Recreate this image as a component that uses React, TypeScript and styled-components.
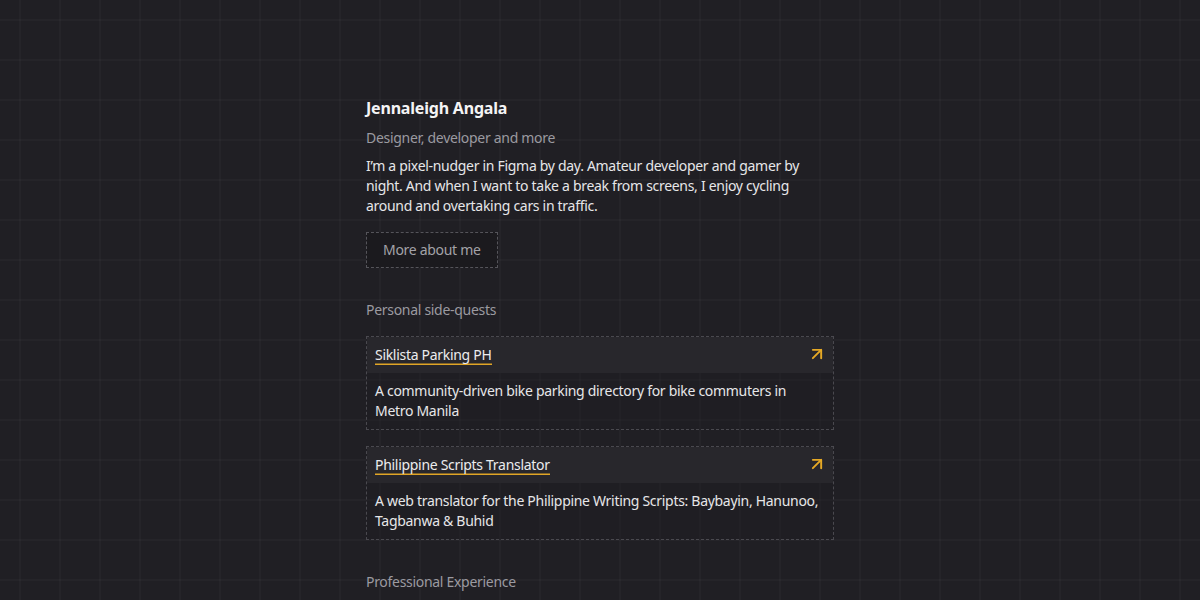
import React from "react";
import styled, { createGlobalStyle } from "styled-components";
import { ArrowUpRight } from "lucide-react";

const GlobalStyle = createGlobalStyle`
  html, body {
    margin: 0;
    padding: 0;
  }
  body {
    background-color: #201f24;
    background-image:
      linear-gradient(to right, rgba(255,255,255,0.022) 0 2px, transparent 2px),
      linear-gradient(to bottom, rgba(255,255,255,0.022) 0 2px, transparent 2px);
    background-size: 40px 40px;
    background-position: 19px 19px;
    font-family: "Noto Sans", "Open Sans", sans-serif;
    letter-spacing: -0.3px;
    color: #e6e6e8;
    min-height: 600px;
  }
`;

const Main = styled.main`
  width: 468px;
  margin: 0 auto;
  padding-top: 96px;
  display: flex;
  flex-direction: column;
`;

const Name = styled.h1`
  margin: 0;
  font-size: 16px;
  line-height: 24px;
  font-weight: 700;
  letter-spacing: -0.2px;
  color: #f4f4f5;
`;

const Subtitle = styled.p`
  margin: 8px 0 0;
  font-size: 14px;
  line-height: 20px;
  color: #9b9aa0;
`;

const Bio = styled.p`
  margin: 8px 0 0;
  font-size: 14px;
  line-height: 20px;
  color: #e6e6e8;
`;

const Button = styled.a`
  align-self: flex-start;
  margin-top: 16px;
  padding: 7px 16px;
  font-size: 14px;
  line-height: 20px;
  color: #a3a2a8;
  background: #1b1a1e;
  border: 1px dashed #55545a;
  text-decoration: none;
`;

const SectionTitle = styled.h2`
  margin: 32px 0 0;
  font-size: 14px;
  line-height: 20px;
  font-weight: 400;
  color: #9b9aa0;
`;

const CardList = styled.div`
  display: flex;
  flex-direction: column;
  gap: 16px;
  margin-top: 16px;
`;

const Card = styled.div`
  border: 1px dashed #4a494f;
  background: rgba(30, 29, 34, 0.4);
`;

const CardHeader = styled.div`
  display: flex;
  align-items: center;
  justify-content: space-between;
  padding: 8px;
  background: #28272c;
`;

const CardTitle = styled.a`
  font-size: 14px;
  line-height: 20px;
  color: #ececee;
  text-decoration: none;
  box-shadow: inset 0 -1.5px 0 #e0a526;
`;

const ArrowIcon = styled(ArrowUpRight)`
  color: #e6a925;
  margin: -3px -2px 0 0;
`;

const CardBody = styled.p`
  margin: 0;
  padding: 8px;
  font-size: 14px;
  line-height: 20px;
  color: #e6e6e8;
`;

const projects = [
  {
    title: "Siklista Parking PH",
    desc: "A community-driven bike parking directory for bike commuters in Metro Manila",
  },
  {
    title: "Philippine Scripts Translator",
    desc: "A web translator for the Philippine Writing Scripts: Baybayin, Hanunoo, Tagbanwa & Buhid",
  },
];

export default function App() {
  return (
    <>
      <GlobalStyle />
      <Main>
        <Name>Jennaleigh Angala</Name>
        <Subtitle>Designer, developer and more</Subtitle>
        <Bio>
          I’m a pixel-nudger in Figma by day. Amateur developer and gamer by
          night. And when I want to take a break from screens, I enjoy cycling
          around and overtaking cars in traffic.
        </Bio>
        <Button href="#">More about me</Button>
        <SectionTitle>Personal side-quests</SectionTitle>
        <CardList>
          {projects.map((p) => (
            <Card key={p.title}>
              <CardHeader>
                <CardTitle href="#">{p.title}</CardTitle>
                <ArrowIcon size={20} strokeWidth={2.3} />
              </CardHeader>
              <CardBody>{p.desc}</CardBody>
            </Card>
          ))}
        </CardList>
        <SectionTitle>Professional Experience</SectionTitle>
      </Main>
    </>
  );
}
